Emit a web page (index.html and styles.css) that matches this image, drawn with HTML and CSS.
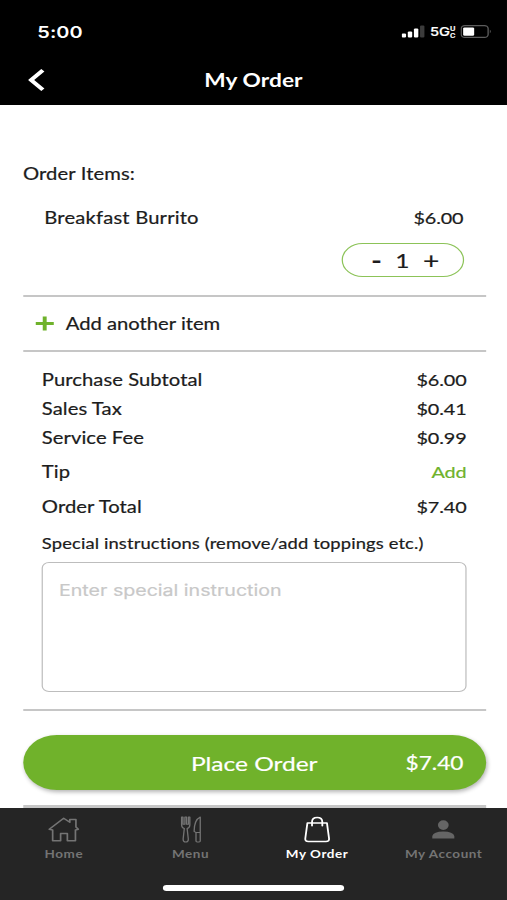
FILE: index.html
```html
<!DOCTYPE html>
<html lang="en">
<head>
    <meta charset="utf-8">
    <title>My Order</title>
    <link rel="stylesheet" href="styles.css">
</head>
<body>
    <div class="screen">
        <header class="header">
            <div class="status-bar">
                <span class="time">5:00</span>
                <div class="status-icons">
                    <svg class="signal" width="19" height="13" viewBox="0 0 19 13">
                        <rect x="0" y="8.5" width="3.6" height="4" rx="1" fill="#fff"/>
                        <rect x="5" y="6.5" width="3.6" height="6" rx="1" fill="#fff"/>
                        <rect x="10" y="3.5" width="3.6" height="9" rx="1" fill="#fff"/>
                        <rect x="15" y="0.5" width="3.6" height="12" rx="1" fill="#3c3c3c"/>
                    </svg>
                    <span class="network">5G</span>
                    <span class="network-sub"><span>U</span><span>C</span></span>
                    <svg class="battery" width="26" height="13" viewBox="0 0 26 13">
                        <rect x="0.6" y="0.6" width="22" height="11.8" rx="3" fill="none" stroke="#5c5c5c" stroke-width="1.1"/>
                        <rect x="2.2" y="2.4" width="9" height="8.4" rx="1.2" fill="#fff"/>
                        <path d="M24 4.6 Q25.6 6.5 24 8.4Z" fill="#5c5c5c"/>
                    </svg>
                </div>
            </div>
            <div class="title-bar">
                <svg class="back" width="14" height="24" viewBox="0 0 14 24">
                    <path d="M12 2.3 L2.4 12 L12 21.7" fill="none" stroke="#fff" stroke-width="3.6"/>
                </svg>
                <h1>My Order</h1>
            </div>
        </header>

        <main class="content">
            <h2>Order Items:</h2>
            <section class="item">
                <div class="row item-row">
                    <span>Breakfast Burrito</span>
                    <span class="amount">$6.00</span>
                </div>
                <div class="quantity">
                    <span class="minus">-</span>
                    <span>1</span>
                    <span class="plus">+</span>
                </div>
            </section>

            <div class="add-item">
                <svg width="15" height="15" viewBox="0 0 15 15">
                    <path d="M7.5 0.5 V14.5 M0 7.5 H15" stroke="#6fb22b" stroke-width="3.2"/>
                </svg>
                <span>Add another item</span>
            </div>

            <section class="summary">
                <div class="row"><span>Purchase Subtotal</span><span class="amount">$6.00</span></div>
                <div class="row"><span>Sales Tax</span><span class="amount">$0.41</span></div>
                <div class="row"><span>Service Fee</span><span class="amount">$0.99</span></div>
                <div class="row tip"><span>Tip</span><span class="amount add-tip">Add</span></div>
                <div class="row total"><span>Order Total</span><span class="amount">$7.40</span></div>
                <label for="instructions">Special instructions (remove/add toppings etc.)</label>
                <textarea id="instructions" placeholder="Enter special instruction"></textarea>
            </section>

            <button class="place-order">
                <span></span>
                <span>Place Order</span>
                <span class="price">$7.40</span>
            </button>
            <hr>
        </main>

        <nav class="tabs">
            <ul>
                <li>
                    <svg width="26" height="26" viewBox="0 0 26 26" fill="none" stroke="#747474" stroke-width="1.4" stroke-linejoin="round">
                        <path d="M4 13.5 L1.2 12.8 L13 1.8 L18 5.8 V3 H23 V10.5 L25 12.8 L22.6 13.5 V24.2 H16 V17 H10.5 V24.2 H4Z"/>
                    </svg>
                    <span>Home</span>
                </li>
                <li>
                    <svg width="18" height="28" viewBox="0 0 18 28" fill="none" stroke="#747474" stroke-width="1.1" stroke-linejoin="round">
                        <path d="M1 1 V9 Q1 12 3.3 13 L2.3 24 Q2.3 27 4.5 27 Q6.7 27 6.7 24 L5.7 13 Q8 12 8 9 V1 H6.8 V8.5 H5.2 V1 H3.8 V8.5 H2.2 V1Z"/>
                        <path d="M16.8 1 Q11.6 4 11.6 16 L13.2 17.2 V26 Q13.2 27 14.2 27 H15.8 Q16.8 27 16.8 26Z M13.2 17.2 H16.8"/>
                    </svg>
                    <span>Menu</span>
                </li>
                <li class="active">
                    <svg width="22" height="26" viewBox="0 0 22 26" fill="none" stroke="#fff" stroke-width="1.5" stroke-linejoin="round" stroke-linecap="round">
                        <path d="M3 6.6 H19 L20.7 22 Q21 25 18.2 25 H3.8 Q1 25 1.3 22Z"/>
                        <path d="M6.8 9.3 V5.5 Q6.8 1 11 1 Q15.2 1 15.2 5.5 V9.3"/>
                    </svg>
                    <span>My Order</span>
                </li>
                <li>
                    <svg width="20" height="26" viewBox="0 0 20 26" fill="#656565">
                        <ellipse cx="10" cy="8.6" rx="4.4" ry="4.8"/>
                        <path d="M1 22 V19.5 Q2 15 10 15 Q18 15 19 19.5 V22Z"/>
                    </svg>
                    <span>My Account</span>
                </li>
            </ul>
            <div class="home-indicator"></div>
        </nav>
    </div>
</body>
</html>
```
FILE: styles.css
```css
* {
    box-sizing: border-box;
}

body {
    margin: 0;
    overflow: hidden;
    background-color: #fff;
}

/* 414px wide phone layout, widened to fill the window */
.screen {
    width: 414px;
    height: 900px;
    display: flex;
    flex-direction: column;
    font-family: Lato, sans-serif;
    font-size: 16.5px;
    font-variant-ligatures: none;
    letter-spacing: 0.05px;
    color: #1c1c1c;
    background-color: #fff;
    -webkit-text-stroke: 0.2px;
    transform: scaleX(1.2246);
    transform-origin: 0 0;
}

.header {
    height: 105px;
    flex-shrink: 0;
    background-color: #000;
    color: #fff;
}

.status-bar {
    height: 56px;
    padding: 7px 12px 0 30.5px;
    display: flex;
    align-items: center;
    justify-content: space-between;
}

.time {
    font-family: Inter, sans-serif;
    font-size: 16.3px;
    font-weight: 600;
    letter-spacing: 0;
    -webkit-text-stroke: 0;
}

.status-icons {
    display: flex;
    align-items: center;
}

.network {
    margin-left: 4px;
    font-family: Inter, sans-serif;
    font-size: 12px;
    font-weight: 500;
    letter-spacing: 0;
}

.network-sub {
    display: flex;
    flex-direction: column;
    font-family: Inter, sans-serif;
    font-size: 6px;
    font-weight: 600;
    line-height: 7px;
}

.battery {
    margin-left: 4px;
}

.title-bar {
    height: 48px;
    padding: 0 23px;
    display: grid;
    grid-template-columns: 14px 1fr 14px;
    align-items: center;
}

.title-bar h1 {
    margin: 0;
    font-size: 18.5px;
    font-weight: 700;
    text-align: center;
    -webkit-text-stroke: 0;
}

.content {
    height: 703px;
    padding: 58px 17.5px 0 18.7px;
    overflow: hidden;
}

.content h2 {
    margin: 0;
    font-size: 16.5px;
    font-weight: 400;
    letter-spacing: 0.1px;
    line-height: 22px;
}

.row {
    display: flex;
    justify-content: space-between;
    align-items: baseline;
    height: 29px;
    line-height: 29px;
}

.amount {
    font-size: 16.2px;
    letter-spacing: -0.1px;
}

.item {
    height: 112px;
    padding: 18px 18px 0 17.5px;
    border-bottom: 2px solid #c6c6c6;
}

.item-row {
    letter-spacing: 0.15px;
}

.quantity {
    width: 100px;
    height: 34px;
    margin: 11px 0 0 auto;
    padding: 0 0 1px 5px;
    display: flex;
    align-items: center;
    justify-content: center;
    gap: 11px;
    border: 1.5px solid #8cc358;
    border-radius: 17px;
    font-size: 20px;
}

.minus {
    font-weight: 700;
    font-size: 23px;
}

.plus {
    font-size: 23px;
}

.add-item {
    height: 55px;
    padding-left: 10px;
    display: flex;
    align-items: center;
    gap: 10px;
    border-bottom: 2px solid #c6c6c6;
    letter-spacing: 0;
}

.summary {
    height: 359px;
    padding: 13px 15.5px 0;
    border-bottom: 2px solid #c6c6c6;
}

.tip {
    height: 40px;
    line-height: 40px;
}

.total {
    height: 30px;
    line-height: 30px;
}

.add-tip {
    color: #6fb22b;
}

.summary label {
    display: block;
    padding-top: 2px;
    font-size: 15px;
    letter-spacing: 0.1px;
    line-height: 38px;
}

.summary textarea {
    display: block;
    width: 100%;
    height: 130px;
    padding: 17px 13px;
    border: 1.5px solid #bdbdbd;
    border-radius: 6px;
    outline: none;
    resize: none;
    font-family: Inter, sans-serif;
    font-size: 16px;
    line-height: 20px;
}

.summary textarea::placeholder {
    color: #c8c8c8;
}

.place-order {
    width: 100%;
    height: 55px;
    margin: 24px 0 15px;
    padding: 0 18px;
    display: grid;
    grid-template-columns: 1fr auto 1fr;
    align-items: center;
    border: none;
    border-radius: 28px;
    background-color: #70b22b;
    box-shadow: 1px 2px 4px rgba(0, 0, 0, 0.3);
    color: #fff;
    font-family: Lato, sans-serif;
    font-size: 20px;
}

.price {
    font-size: 18.5px;
    text-align: right;
}

.content hr {
    margin: 0;
    border: none;
    border-top: 3px solid #c6c6c6;
}

.tabs {
    height: 92px;
    flex-shrink: 0;
    background-color: #252525;
    color: #747474;
}

.tabs ul {
    height: 77px;
    margin: 0;
    padding: 8px 0 0 0.5px;
    display: grid;
    grid-template-columns: repeat(4, 1fr);
    list-style: none;
}

.tabs li {
    display: flex;
    flex-direction: column;
    align-items: center;
    font-size: 11px;
    font-weight: 700;
    letter-spacing: 0.45px;
    line-height: 14px;
    -webkit-text-stroke: 0;
}

.tabs li svg {
    height: 27px;
    margin-bottom: 4px;
}

.tabs .active {
    color: #fff;
}

.home-indicator {
    width: 148px;
    height: 6px;
    margin: 0 auto;
    border-radius: 3px;
    background-color: #fff;
}
```
